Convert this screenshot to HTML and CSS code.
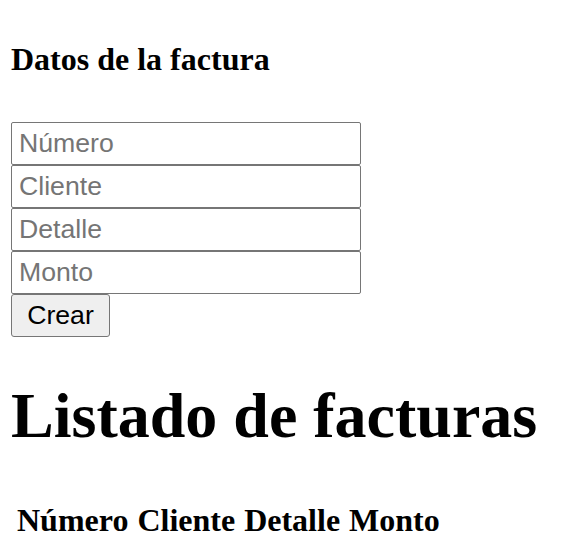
FILE: index.html
```html
<!DOCTYPE html>
<html lang="es">
<head>
<meta charset="utf-8">
<title>Facturas</title>
<link rel="stylesheet" href="styles.css">
</head>
<body>
<h3 class="form-title">Datos de la factura</h3>
<form class="invoice-form">
  <input class="field" type="text" placeholder="Número">
  <input class="field" type="text" placeholder="Cliente">
  <input class="field" type="text" placeholder="Detalle">
  <input class="field" type="text" placeholder="Monto">
  <button class="btn" type="button">Crear</button>
</form>
<h1 class="list-title">Listado de facturas</h1>
<table class="invoice-table">
  <thead>
    <tr><th>Número</th><th>Cliente</th><th>Detalle</th><th>Monto</th></tr>
  </thead>
</table>
</body>
</html>
```
FILE: styles.css
```css
html, body {
  margin: 0;
  padding: 0;
  background: #fff;
}
body {
  padding: 0 11px;
  font-family: "Liberation Serif", "Times New Roman", serif;
  color: #000;
}
.form-title {
  margin: 41px 0 0;
  height: 81px;
  font-size: 32px;
  font-weight: bold;
  line-height: 37px;
}
.invoice-form {
  display: flex;
  flex-direction: column;
  align-items: flex-start;
  margin: 0;
}
.field {
  box-sizing: border-box;
  width: 350px;
  height: 43px;
  margin: 0;
  padding: 0 7px;
  border: 1px solid #767676;
  border-radius: 2px;
  font-family: "Liberation Sans", Arial, sans-serif;
  font-size: 26.67px;
  color: #000;
  background: #fff;
}
.field::placeholder {
  color: #757575;
}
.btn {
  box-sizing: border-box;
  height: 43px;
  width: 99px;
  margin: 0;
  padding: 0;
  border: 1px solid #767676;
  border-radius: 3px;
  background: #efefef;
  font-family: "Liberation Sans", Arial, sans-serif;
  font-size: 26.67px;
  color: #000;
}
.list-title {
  margin: 42px 0 0;
  font-size: 64px;
  font-weight: bold;
  line-height: 74px;
}
.invoice-table {
  margin-top: 46px;
  border-spacing: 3px;
}
.invoice-table th {
  padding: 0 3px;
  font-size: 32px;
  font-weight: bold;
  line-height: 37px;
}
```
